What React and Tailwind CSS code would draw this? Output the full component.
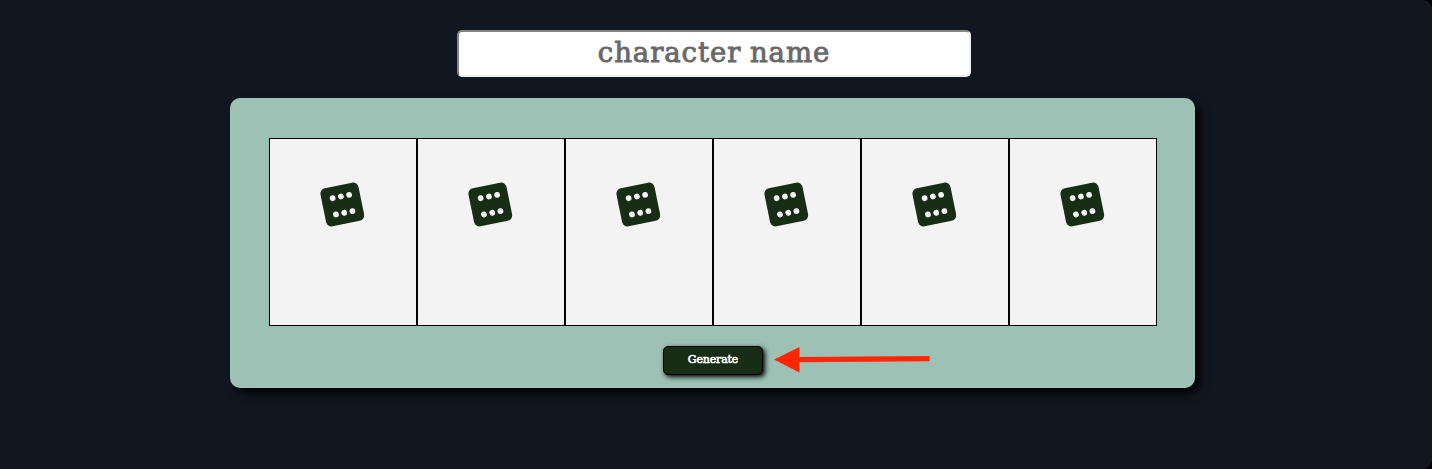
function Die() {
  return (
    <svg className="size-[48px]" viewBox="0 0 48 48" aria-hidden="true">
      <g transform="translate(0.3 0.5) rotate(-11.5 24 24)">
        <rect x="4.6" y="4.6" width="38.8" height="38.8" rx="5.5" fill="#182d15" />
        <g fill="#f3f3f3">
          <circle cx="15.8" cy="15.9" r="2.9" />
          <circle cx="24.2" cy="15.9" r="2.9" />
          <circle cx="32.6" cy="15.9" r="2.9" />
          <circle cx="15.8" cy="32.5" r="2.9" />
          <circle cx="24.2" cy="32.5" r="2.9" />
          <circle cx="32.6" cy="32.5" r="2.9" />
        </g>
      </g>
    </svg>
  );
}

export default function App() {
  return (
    <div className="bg-black">
      <main className="flex h-[469px] w-[1432px] flex-col items-center rounded-r-[9px] bg-[#111721] pt-[30px] pr-[7px] font-['DejaVu_Serif',serif]">
        <input
          aria-label="character name"
          placeholder="character name"
          className="ml-[3px] h-[47px] w-[514px] rounded-[5px] border-2 border-t-[#858585] border-l-[#858585] border-r-[#eeeeee] border-b-[#eeeeee] bg-white pb-[4px] text-center text-[27.5px] tracking-[0.95px] [word-spacing:-1px] text-[#696969] placeholder:text-[#696969] outline-none [-webkit-text-stroke:0.9px_#696969]"
        />
        <section className="mt-[21px] flex h-[290px] w-[965px] flex-col items-center rounded-[10px] bg-[#9dc1b5] pt-10 shadow-[5px_5px_10px_#000]">
          <div className="ml-px flex">
            {[1, 2, 3, 4, 5, 6].map((id) => (
              <div
                key={id}
                className="flex h-[188px] w-[148px] justify-center border border-black bg-[#f3f3f3] pt-[41px] pr-[2px]"
              >
                <Die />
              </div>
            ))}
          </div>
          <div className="mt-5 grid w-full grid-cols-[433px_100px_1fr] items-start">
            <button className="col-start-2 h-[29px] w-[100px] rounded-[5px] border border-black bg-[#182d15] text-[11px] tracking-[-0.15px] text-white shadow-[2px_2px_5px_#000] [-webkit-text-stroke:0.6px_white]">
              Generate
            </button>
            <svg className="ml-[11px] h-7 w-[157px]" viewBox="774 346 157 28" aria-hidden="true">
              <path d="M774 359.5 799.5 347V357L929.5 356V361.2L799.5 362.3V372.5Z" fill="#ff2600" />
            </svg>
          </div>
        </section>
      </main>
    </div>
  );
}
